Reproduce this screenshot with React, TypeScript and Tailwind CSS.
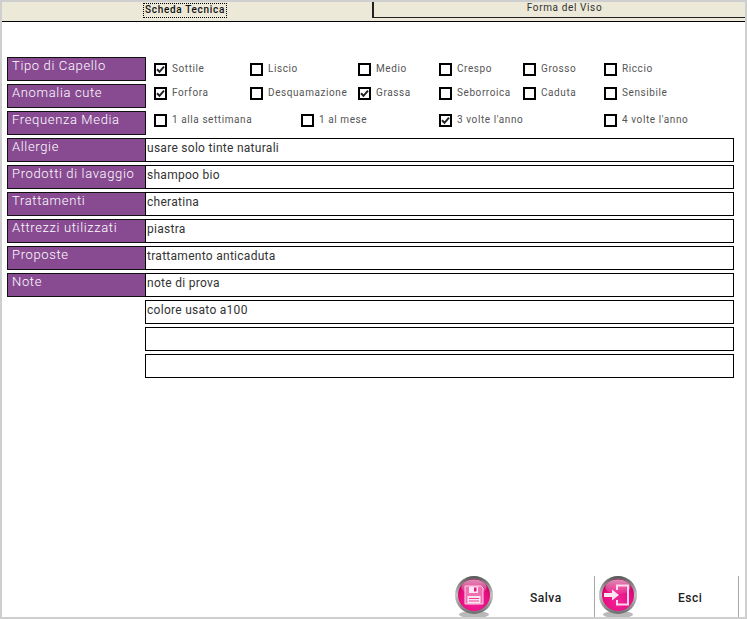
import React from "react";

const labelRows = [
  { label: "Allergie", value: "usare solo tinte naturali" },
  { label: "Prodotti di lavaggio", value: "shampoo bio" },
  { label: "Trattamenti", value: "cheratina" },
  { label: "Attrezzi utilizzati", value: "piastra" },
  { label: "Proposte", value: "trattamento anticaduta" },
  { label: "Note", value: "note di prova" },
  { label: "", value: "colore usato a100" },
  { label: "", value: "" },
  { label: "", value: "" },
];

function Label({ children }: { children: React.ReactNode }) {
  return (
    <div className="w-[139px] h-[24px] shrink-0 bg-[#884b92] border border-[#111] text-white text-[13px] leading-[15px] font-light pl-[4px] tracking-[0.65px] whitespace-nowrap overflow-hidden">
      {children}
    </div>
  );
}

function Check({ label, w, checked }: { label: string; w: string; checked?: boolean }) {
  return (
    <div className={`${w} shrink-0 flex items-start`}>
      <span className="w-[13px] h-[13px] mt-[1px] border-2 border-black bg-white flex items-center justify-center shrink-0">
        {checked && (
          <svg width="9" height="9" viewBox="0 0 9 9">
            <path d="M1 4.2 L3.5 6.8 L8 1.6" fill="none" stroke="#222" strokeWidth="2" />
          </svg>
        )}
      </span>
      <span className="ml-[5px] mt-[1px] text-[10px] leading-[12px] tracking-[0.58px] text-[#555] whitespace-nowrap">{label}</span>
    </div>
  );
}

function Ball({ kind }: { kind: "save" | "exit" }) {
  const id = kind;
  return (
    <svg width="42" height="44" viewBox="0 0 42 44" className="shrink-0">
      <defs>
        <radialGradient id={`${id}p`} cx="50%" cy="70%" r="65%">
          <stop offset="0" stopColor="#f0259a" />
          <stop offset="0.7" stopColor="#e80c80" />
          <stop offset="1" stopColor="#b9085f" />
        </radialGradient>
        <linearGradient id={`${id}r`} x1="0" y1="0" x2="0" y2="1">
          <stop offset="0" stopColor="#555" />
          <stop offset="0.5" stopColor="#c4c4c4" />
          <stop offset="1" stopColor="#6c6c6c" />
        </linearGradient>
        <linearGradient id={`${id}g`} x1="0" y1="0" x2="0" y2="1">
          <stop offset="0" stopColor="#ffffff" stopOpacity="0.55" />
          <stop offset="1" stopColor="#ffffff" stopOpacity="0.05" />
        </linearGradient>
      </defs>
      <ellipse cx="21" cy="39.5" rx="15" ry="3.5" fill="#8a8a8a" opacity="0.6" />
      <circle cx="21" cy="20" r="19" fill={`url(#${id}r)`} />
      <circle cx="21" cy="20" r="16" fill={`url(#${id}p)`} />
      <ellipse cx="21" cy="12" rx="12.5" ry="7.5" fill={`url(#${id}g)`} />
      {kind === "save" ? (
        <g>
          <path d="M12 11 H28 L30 13 V29 H12 Z" fill="#f070b4" stroke="#fbd3e8" strokeWidth="1" />
          <rect x="16" y="11.5" width="9" height="6.5" fill="#fde6f2" />
          <rect x="21" y="12.5" width="2.5" height="4" fill="#e4167f" />
          <rect x="14.5" y="21" width="13" height="7.5" fill="#fde6f2" />
          <path d="M16 23.5 H26 M16 26 H26" stroke="#ee3d98" strokeWidth="1" />
        </g>
      ) : (
        <g>
          <path d="M20 15 V10.5 H31 V29.5 H20 V25" fill="none" stroke="#fbd9ea" strokeWidth="2" />
          <path d="M7 18 H15 V14.5 L22 20 L15 25.5 V22 H7 Z" fill="#fde6f2" />
        </g>
      )}
    </svg>
  );
}

export default function App() {
  return (
    <div className="w-[747px] h-[619px] bg-white border-l-2 border-t-2 border-r-2 border-b-2 border-[#cfcfcf] flex flex-col overflow-hidden font-['Roboto',sans-serif]">
      <div className="h-[20px] shrink-0 flex bg-[#ece9d8] border-b border-black">
        <div className="w-[370px] h-[19px] flex justify-center">
          <span className="h-[15px] mt-[1px] -ml-[4px] px-[1px] border border-dotted border-black text-[10px] leading-[12px] font-medium tracking-[0.68px] text-[#111]">
            Scheda Tecnica
          </span>
        </div>
        <div className="flex-1 h-[16px] border-l-2 border-b border-[#222] pl-[10px] text-center text-[10px] leading-[12px] tracking-[0.62px] text-[#333]">
          Forma del Viso
        </div>
      </div>

      <div className="pt-[35px] pl-[5px] flex flex-col gap-[3px]">
        <div className="flex h-[24px]">
          <Label>Tipo di Capello</Label>
          <div className="flex pt-[5px] pl-[8px]">
            <Check w="w-[96px]" label="Sottile" checked />
            <Check w="w-[108px]" label="Liscio" />
            <Check w="w-[81px]" label="Medio" />
            <Check w="w-[84px]" label="Crespo" />
            <Check w="w-[81px]" label="Grosso" />
            <Check w="w-[80px]" label="Riccio" />
          </div>
        </div>
        <div className="flex h-[24px]">
          <Label>Anomalia cute</Label>
          <div className="flex pt-[2px] pl-[8px]">
            <Check w="w-[96px]" label="Forfora" checked />
            <Check w="w-[108px]" label="Desquamazione" />
            <Check w="w-[81px]" label="Grassa" checked />
            <Check w="w-[84px]" label="Seborroica" />
            <Check w="w-[81px]" label="Caduta" />
            <Check w="w-[80px]" label="Sensibile" />
          </div>
        </div>
        <div className="flex h-[24px]">
          <Label>Frequenza Media</Label>
          <div className="flex pt-[2px] pl-[8px]">
            <Check w="w-[147px]" label="1 alla settimana" />
            <Check w="w-[138px]" label="1 al mese" />
            <Check w="w-[165px]" label="3 volte l'anno" checked />
            <Check w="w-[90px]" label="4 volte l'anno" />
          </div>
        </div>
        {labelRows.map((r, i) => (
          <div key={i} className="flex h-[24px]">
            {r.label ? <Label>{r.label}</Label> : <div className="w-[139px] shrink-0" />}
            <div className="-ml-px w-[589px] h-[24px] border border-black text-[12px] leading-[17px] pt-[1px] pl-[1px] tracking-[0.28px] text-[#333]">
              {r.value}
            </div>
          </div>
        ))}
      </div>

      <div className="mt-auto h-[41px] flex pl-[449px]">
        <div className="w-[143px] flex">
          <div className="mt-[-1px] ml-[2px]"><Ball kind="save" /></div>
          <span className="ml-[35px] mt-[15px] text-[12px] leading-[14px] font-medium text-[#222] tracking-[0.5px]">Salva</span>
        </div>
        <div className="w-[145px] flex border-l border-r border-[#a8a8a8]">
          <div className="mt-[-1px] ml-[2px]"><Ball kind="exit" /></div>
          <span className="ml-[39px] mt-[15px] text-[12px] leading-[14px] font-medium text-[#222] tracking-[0.5px]">Esci</span>
        </div>
      </div>
    </div>
  );
}
